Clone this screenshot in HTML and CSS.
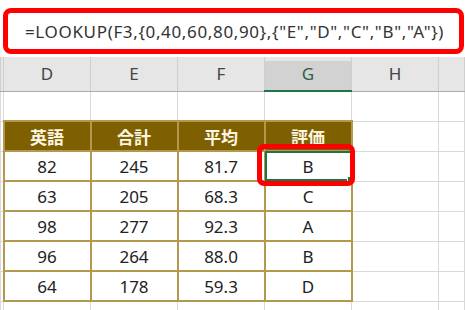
FILE: index.html
```
<!DOCTYPE html>
<html lang="ja">
<head>
  <meta charset="UTF-8">
  <title>LOOKUP 評価</title>
  <link rel="stylesheet" href="styles.css">
</head>
<body>
  <div class="formula-bar">
    <span class="formula">=LOOKUP(F3,{0,40,60,80,90},{"E","D","C","B","A"})</span>
  </div>

  <table class="sheet">
    <colgroup>
      <col class="c-edge">
      <col class="c-std"><col class="c-std"><col class="c-std"><col class="c-std"><col class="c-std">
      <col>
    </colgroup>
    <thead>
      <tr class="col-heads">
        <th></th><th>D</th><th>E</th><th>F</th><th class="sel">G</th><th>H</th><th></th>
      </tr>
    </thead>
    <tbody>
      <tr><td></td><td></td><td></td><td></td><td></td><td></td><td></td></tr>
      <tr class="hdr">
        <td></td><td class="t">英語</td><td class="t">合計</td><td class="t">平均</td><td class="t">評価</td><td></td><td></td>
      </tr>
      <tr>
        <td></td><td class="t">82</td><td class="t">245</td><td class="t">81.7</td>
        <td class="t active">B<span class="cursor"><span class="handle"></span></span><span class="mark"></span></td>
        <td></td><td></td>
      </tr>
      <tr><td></td><td class="t">63</td><td class="t">205</td><td class="t">68.3</td><td class="t">C</td><td></td><td></td></tr>
      <tr><td></td><td class="t">98</td><td class="t">277</td><td class="t">92.3</td><td class="t">A</td><td></td><td></td></tr>
      <tr><td></td><td class="t">96</td><td class="t">264</td><td class="t">88.0</td><td class="t">B</td><td></td><td></td></tr>
      <tr><td></td><td class="t">64</td><td class="t">178</td><td class="t">59.3</td><td class="t">D</td><td></td><td></td></tr>
      <tr><td></td><td></td><td></td><td></td><td></td><td></td><td></td></tr>
    </tbody>
  </table>
</body>
</html>
```

FILE: styles.css
```
body {
  margin: 0;
  width: 465px;
  height: 310px;
  overflow: hidden;
  background: #fff;
  font-family: "Noto Sans", "Noto Sans CJK JP", sans-serif;
  color: #222;
}
.formula-bar {
  margin: 8px 1px 0 3px;
  height: 36px;
  border: 5px solid #ff0000;
  border-radius: 8px;
  display: flex;
  align-items: center;
  padding-left: 17px;
}
.formula {
  font-size: 17px;
  letter-spacing: 0.65px;
  color: #333;
  white-space: nowrap;
}
.sheet {
  margin-top: 3px;
  width: 465px;
  table-layout: fixed;
  border-collapse: collapse;
}
.c-edge {
  width: 3px;
}
.c-std {
  width: 87px;
}
.sheet th, .sheet td {
  padding: 0;
  text-align: center;
  border: 1px solid #d9d9d9;
  font-size: 17px;
  height: 28px;
  overflow: visible;
}
.col-heads th {
  height: 33px;
  background: #e6e6e6;
  border-color: #cfcfcf;
  border-bottom-color: #ababab;
  border-top: none;
  font-weight: normal;
  color: #444;
}
.col-heads th.sel {
  background: #d2d2d2;
  box-shadow: inset 0 4px 0 #e6e6e6;
  border-bottom: 2px solid #217346;
  color: #2f5f48;
}
.sheet td.t {
  border: 2px solid #b39850;
}
.hdr td.t {
  background: #7f6000;
  color: #fdf6e3;
  font-weight: bold;
}
.active {
  position: relative;
}
.cursor {
  position: absolute;
  left: -1px;
  top: -1px;
  right: -1px;
  bottom: -1px;
  border: 2px solid #217346;
}
.handle {
  position: absolute;
  right: -4px;
  bottom: -4px;
  width: 5px;
  height: 5px;
  background: #217346;
  border: 1px solid #fff;
}
.mark {
  position: absolute;
  left: -9px;
  top: -8px;
  right: -4px;
  bottom: -6px;
  border: 5px solid #ff0000;
  border-radius: 7px;
}
```
